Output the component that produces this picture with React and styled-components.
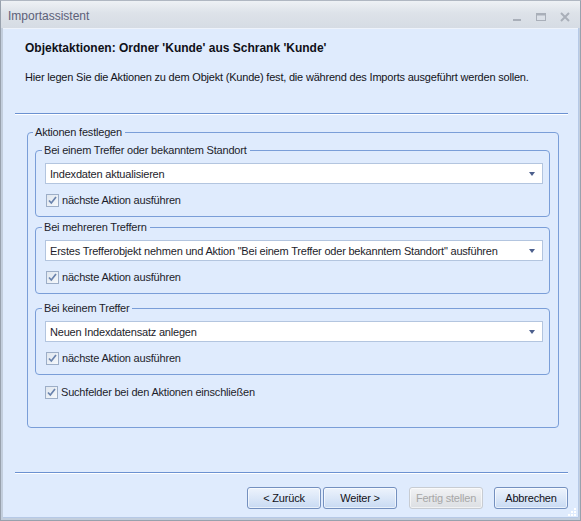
import styled, { createGlobalStyle } from "styled-components";

const GlobalStyle = createGlobalStyle`
  html, body {
    margin: 0;
    padding: 0;
    background: #ffffff;
  }
  body {
    font-family: "Liberation Sans", Arial, sans-serif;
    font-size: 11px;
    color: #1d1d2b;
  }
  * {
    box-sizing: border-box;
  }
`;

const Window = styled.div`
  position: relative;
  width: 581px;
  height: 521px;
  display: flex;
  flex-direction: column;
  background: #c3cedd;
  border: 1px solid #98a1ad;
  border-top-color: #b0b7c2;
`;

const TitleBar = styled.div`
  height: 27px;
  display: flex;
  align-items: center;
  justify-content: space-between;
  padding: 3px 0 0 7px;
  background: linear-gradient(#eef1f5, #dde2e9 45%, #d6dce4);
`;

const Title = styled.span`
  font-size: 12px;
  color: #5c6078;
`;

const Controls = styled.div`
  display: flex;
  align-items: center;
  gap: 10px;
  padding: 2px 8px 0 0;
`;

const Client = styled.div`
  flex: 1;
  display: flex;
  flex-direction: column;
  margin: 0 2px 3px 2px;
  background: #dfebfd;
  border-top: 1px solid #eef3fb;
  box-shadow: 1px 0 0 #b6c9e6, 0 1px 0 #b6c9e6;
`;

const Header = styled.div`
  padding: 12px 22px 0 22px;
`;

const Heading = styled.h1`
  margin: 0;
  font-size: 12px;
  font-weight: bold;
  line-height: 14px;
  color: #101018;
`;

const Description = styled.p`
  margin: 15px 0 0 0;
  font-size: 11px;
  line-height: 14px;
  letter-spacing: -0.2px;
  color: #141420;
`;

const Divider = styled.div`
  margin: ${(p) => p.$top}px 10px 0 12px;
  height: 2px;
  border-top: 1px solid #6b91d1;
  border-bottom: 1px solid #ffffff;
`;

const Main = styled.div`
  flex: 1;
  padding: 11px 19px 0 24px;
`;

const Group = styled.fieldset`
  margin: ${(p) => p.$top || 0}px 0 0 0;
  padding: ${(p) => (p.$outer ? "5px 8px 28px 7px" : "6px 6px 9px 9px")};
  border: 1px solid #7a9ed8;
  border-radius: 4px;
  min-width: 0;
`;

const Legend = styled.legend`
  margin-left: ${(p) => (p.$outer ? "-2px" : "-3px")};
  padding: 0 3px 0 2px;
  font-size: 11px;
  line-height: 13px;
  letter-spacing: -0.2px;
  color: #1d1d2b;
`;

const Select = styled.div`
  height: 21px;
  display: flex;
  align-items: center;
  justify-content: space-between;
  padding: 0 7px 0 4px;
  background: #ffffff;
  border: 1px solid #b3c5df;
  font-size: 11px;
  letter-spacing: -0.2px;
  color: #1d1d2b;
`;

const Arrow = styled.span`
  width: 0;
  height: 0;
  border-left: 3px solid transparent;
  border-right: 3px solid transparent;
  border-top: 4px solid #4c5f8c;
`;

const CheckRow = styled.label`
  display: flex;
  align-items: center;
  gap: 3px;
  margin-top: ${(p) => p.$top}px;
  margin-left: ${(p) => p.$left || 0}px;
  font-size: 11px;
  letter-spacing: -0.2px;
  color: #1d1d2b;
  line-height: 13px;
`;

const Box = styled.span`
  width: 13px;
  height: 13px;
  display: flex;
  align-items: center;
  justify-content: center;
  border: 1px solid #9daec7;
  background: linear-gradient(135deg, #dfe6ef, #f5f8fb);
`;

const Footer = styled.div`
  display: flex;
  justify-content: flex-end;
  padding: 13px 10px 8px 0;
`;

const Button = styled.button`
  width: 74px;
  height: 22px;
  margin-left: ${(p) => p.$gap}px;
  padding: 0;
  font-family: "Liberation Sans", Arial, sans-serif;
  font-size: 11px;
  letter-spacing: -0.2px;
  color: ${(p) => (p.disabled ? "#a7a7a7" : "#111118")};
  border: 1px solid ${(p) => (p.disabled ? "#c8ccd2" : "#7490bf")};
  border-radius: 3px;
  background: ${(p) =>
    p.disabled
      ? "linear-gradient(#f2f3f5, #e6e8eb 50%, #dcdfe3)"
      : "linear-gradient(#edf3fc, #dbe7f8 50%, #c8daf3)"};
  box-shadow: inset 0 0 0 1px rgba(255, 255, 255, 0.6);
`;

const Grip = styled.svg`
  position: absolute;
  right: 3px;
  bottom: 3px;
`;

const Check = () => (
  <Box>
    <svg width="9" height="9" viewBox="0 0 9 9">
      <path
        d="M1 4.5 L3.3 7 L8 1"
        fill="none"
        stroke="#6a83ad"
        strokeWidth="1.7"
      />
    </svg>
  </Box>
);

const WindowIcons = () => (
  <Controls>
    <svg width="14" height="12" viewBox="0 0 14 12">
      <rect x="3" y="8" width="8" height="2" fill="#a9afb9" />
    </svg>
    <svg width="14" height="12" viewBox="0 0 14 12">
      <rect x="2.5" y="2.5" width="9" height="7" fill="none" stroke="#a9afb9" />
      <rect x="2.5" y="2.5" width="9" height="2" fill="#a9afb9" />
    </svg>
    <svg width="14" height="12" viewBox="0 0 14 12">
      <path d="M3 2 L11 10 M11 2 L3 10" stroke="#a9afb9" strokeWidth="2" />
    </svg>
  </Controls>
);

const groups = [
  {
    title: "Bei einem Treffer oder bekanntem Standort",
    value: "Indexdaten aktualisieren",
    top: 0,
  },
  {
    title: "Bei mehreren Treffern",
    value:
      'Erstes Trefferobjekt nehmen und Aktion "Bei einem Treffer oder bekanntem Standort" ausführen',
    top: 4,
  },
  {
    title: "Bei keinem Treffer",
    value: "Neuen Indexdatensatz anlegen",
    top: 8,
  },
];

export default function App() {
  return (
    <>
      <GlobalStyle />
      <Window>
        <TitleBar>
          <Title>Importassistent</Title>
          <WindowIcons />
        </TitleBar>
        <Client>
          <Header>
            <Heading>Objektaktionen: Ordner 'Kunde' aus Schrank 'Kunde'</Heading>
            <Description>
              Hier legen Sie die Aktionen zu dem Objekt (Kunde) fest, die
              während des Imports ausgeführt werden sollen.
            </Description>
          </Header>
          <Divider $top={29} />
          <Main>
            <Group $outer>
              <Legend $outer>Aktionen festlegen</Legend>
              {groups.map((g) => (
                <Group key={g.title} $top={g.top}>
                  <Legend>{g.title}</Legend>
                  <Select>
                    <span>{g.value}</span>
                    <Arrow />
                  </Select>
                  <CheckRow $top={10} $left={1}>
                    <Check />
                    nächste Aktion ausführen
                  </CheckRow>
                </Group>
              ))}
              <CheckRow $top={11} $left={10}>
                <Check />
                Suchfelder bei den Aktionen einschließen
              </CheckRow>
            </Group>
          </Main>
          <Divider $top={0} />
          <Footer>
            <Button $gap={0}>&lt; Zurück</Button>
            <Button $gap={2}>Weiter &gt;</Button>
            <Button $gap={12} disabled>
              Fertig stellen
            </Button>
            <Button $gap={11}>Abbrechen</Button>
          </Footer>
        </Client>
        <Grip width="10" height="10" viewBox="0 0 10 10">
          {[
            [8, 2],
            [8, 5],
            [8, 8],
            [5, 5],
            [5, 8],
            [2, 8],
          ].map(([x, y]) => (
            <rect key={`${x}-${y}`} x={x - 1} y={y - 1} width="2" height="2" fill="#ffffff" />
          ))}
        </Grip>
      </Window>
    </>
  );
}
